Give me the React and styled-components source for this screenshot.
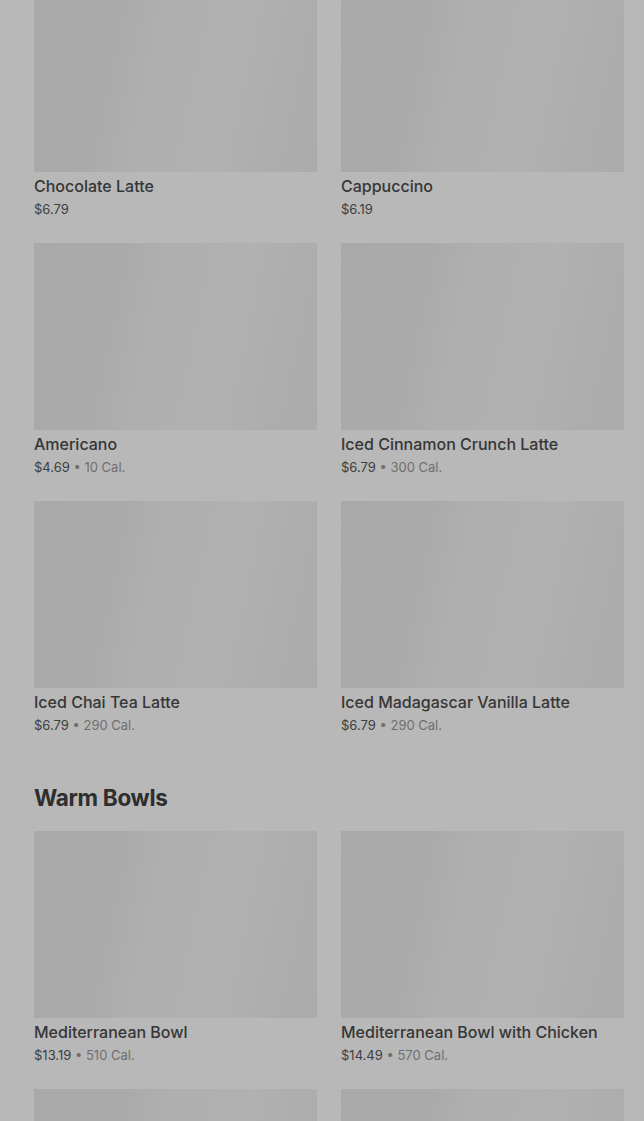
import React from "react";
import styled, { createGlobalStyle } from "styled-components";

const Global = createGlobalStyle`
  html, body { margin: 0; padding: 0; background: #b8b8b8; }
  body { font-family: Inter, "Noto Sans", sans-serif; overflow: hidden; }
`;

const Page = styled.div`
  height: 1121px;
  overflow: hidden;
  background: #b8b8b8;
`;

const Content = styled.div`
  margin-top: -15px;
  padding: 0 20px 0 34px;
`;

const Section = styled.section`
  display: flex;
  flex-direction: column;
  & + & { margin-top: 47px; }
`;

const Heading = styled.h2`
  margin: 0 0 17px;
  font-size: 22.5px;
  line-height: 32px;
  font-weight: 700;
  color: #2e2e2e;
  letter-spacing: -0.3px;
`;

const Grid = styled.div`
  display: grid;
  grid-template-columns: 1fr 1fr;
  column-gap: 24px;
  row-gap: 24px;
`;

const Card = styled.div`
  display: flex;
  flex-direction: column;
`;

const Thumb = styled.div`
  height: 187px;
  background: linear-gradient(102deg, #a9a9a9 0%, #aaaaaa 28%, #afafaf 42%, #b1b1b1 68%, #adadad 85%, #ababab 100%);
`;

const Title = styled.div`
  margin-top: 4px;
  font-size: 16px;
  line-height: 20px;
  font-weight: 500;
  color: #363636;
`;

const Meta = styled.div`
  margin-top: 3px;
  font-size: 13px;
  line-height: 20px;
  color: #3e3e3e;
`;

const Cal = styled.span`
  color: #6f6f6f;
`;

const drinks = [
  { name: "Chocolate Latte", price: "$6.79" },
  { name: "Cappuccino", price: "$6.19" },
  { name: "Americano", price: "$4.69", cal: "10 Cal." },
  { name: "Iced Cinnamon Crunch Latte", price: "$6.79", cal: "300 Cal." },
  { name: "Iced Chai Tea Latte", price: "$6.79", cal: "290 Cal." },
  { name: "Iced Madagascar Vanilla Latte", price: "$6.79", cal: "290 Cal." },
];

const bowls = [
  { name: "Mediterranean Bowl", price: "$13.19", cal: "510 Cal." },
  { name: "Mediterranean Bowl with Chicken", price: "$14.49", cal: "570 Cal." },
  { id: "b3" },
  { id: "b4" },
];

function Item({ item }) {
  return (
    <Card>
      <Thumb />
      {item.name && <Title>{item.name}</Title>}
      {item.price && (
        <Meta>
          {item.price}
          {item.cal && <Cal> • {item.cal}</Cal>}
        </Meta>
      )}
    </Card>
  );
}

export default function App() {
  return (
    <Page>
      <Global />
      <Content>
        <Section>
          <Grid>
            {drinks.map((d) => <Item key={d.name} item={d} />)}
          </Grid>
        </Section>
        <Section>
          <Heading>Warm Bowls</Heading>
          <Grid>
            {bowls.map((d) => <Item key={d.name || d.id} item={d} />)}
          </Grid>
        </Section>
      </Content>
    </Page>
  );
}
